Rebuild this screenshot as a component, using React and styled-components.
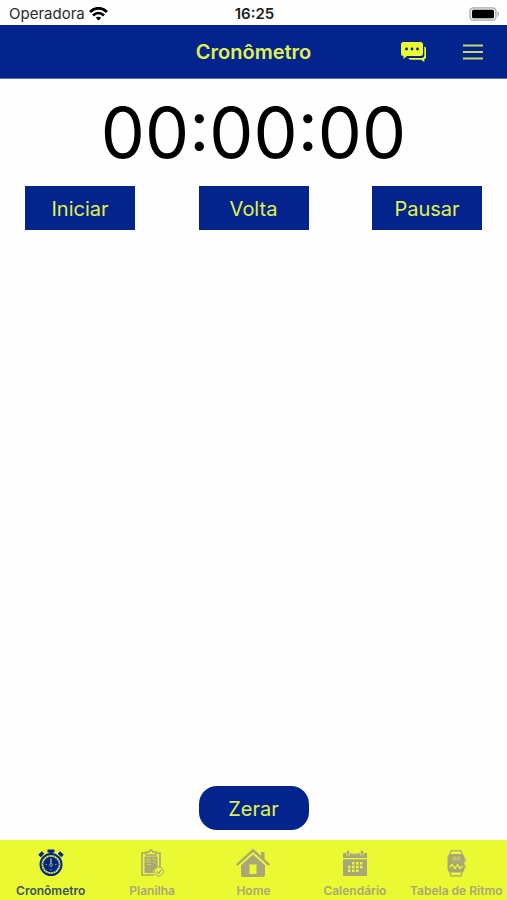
import React from "react";
import styled, { createGlobalStyle } from "styled-components";

const NAVY = "#02248c";
const LIME = "#eaf932";
const LIME_TEXT = "#e2f04e";
const MUTED = "#a9a777";

const GlobalStyle = createGlobalStyle`
  *, *::before, *::after { box-sizing: border-box; }
  body { margin: 0; background: #fff; font-family: Inter, "Liberation Sans", sans-serif; }
  button { font-family: inherit; border: 0; padding: 0; cursor: pointer; }
  svg { display: block; }
`;

const Screen = styled.div`
  display: flex;
  flex-direction: column;
  min-height: 100vh;
  background: #fefefe;
`;

const StatusBar = styled.div`
  display: grid;
  grid-template-columns: 1fr auto 1fr;
  align-items: center;
  height: 25px;
  padding: 2px 7px 0 9px;
  color: #2b2b2b;
  font-size: 15px;
  line-height: 20px;
`;

const Carrier = styled.span`
  display: flex;
  align-items: center;
  gap: 4px;
`;

const Clock = styled.time`
  color: #1c1c1c;
  font-weight: 600;
`;

const BatterySlot = styled.span`
  justify-self: end;
`;

const Header = styled.header`
  display: grid;
  grid-template-columns: 1fr auto 1fr;
  align-items: center;
  height: 54px;
  padding: 0 24px;
  background: ${NAVY};
  border-bottom: 1px solid #5a70b8;
`;

const Title = styled.h1`
  grid-column: 2;
  margin: 0;
  color: ${LIME_TEXT};
  font-size: 20px;
  line-height: 24px;
  font-weight: 600;
`;

const HeaderActions = styled.div`
  display: flex;
  justify-content: flex-end;
  gap: 36px;
`;

const IconButton = styled.button`
  display: grid;
  place-items: center;
  height: 28px;
  background: transparent;
  color: ${LIME};
`;

const Main = styled.main`
  display: flex;
  flex: 1;
  flex-direction: column;
  padding: 16px 25px 10px;
`;

const Timer = styled.output`
  color: #000;
  font-size: 70px;
  line-height: 76px;
  text-align: center;
`;

const Controls = styled.div`
  display: flex;
  justify-content: space-between;
  margin-top: 15px;
`;

const ActionButton = styled.button`
  width: 110px;
  height: 44px;
  padding-top: 2px;
  background: ${NAVY};
  border-radius: ${({ $rounded }) => ($rounded ? "18px" : "0")};
  color: ${LIME_TEXT};
  font-size: 20px;
  line-height: 24px;
`;

const Footer = styled.div`
  display: flex;
  justify-content: center;
  margin-top: auto;
`;

const TabBar = styled.nav`
  display: grid;
  grid-template-columns: repeat(5, 1fr);
  height: 60px;
  background: ${LIME};
`;

const Tab = styled.a`
  display: flex;
  flex-direction: column;
  align-items: center;
  gap: 4px;
  padding-top: 7px;
  color: ${({ $active }) => ($active ? NAVY : MUTED)};
  text-decoration: none;
`;

const TabLabel = styled.span`
  color: ${({ $active }) => ($active ? "#3c5360" : MUTED)};
  font-size: 12px;
  line-height: 16px;
  font-weight: 600;
  white-space: nowrap;
`;

const WifiIcon = () => (
  <svg width="19" height="14" viewBox="0 0 19 14" fill="none" stroke="#000" strokeWidth="2.8" aria-hidden="true">
    <path d="M1 5C6 0 13 0 18 5" />
    <path d="M4 8.4c3.3-3.1 7.7-3.1 11 0" />
    <path d="M6.800 10.800q2.700-2 5.400 0L9.500 13.600z" fill="#000" stroke="none" />
  </svg>
);

const BatteryIcon = () => (
  <svg width="31" height="14" viewBox="0 0 31 14" role="img" aria-label="Bateria">
    <rect x="1" y="0.8" width="26" height="12.4" rx="3.5" fill="#eee" stroke="#aaa" strokeWidth="1.3" />
    <rect x="3" y="2.7" width="22" height="8.6" rx="1.5" fill="#000" />
    <path d="M28.5 4.500c2 .6 2 4.400 0 5z" fill="#aaa" />
  </svg>
);

const ChatIcon = () => (
  <svg width="26" height="20" viewBox="0 0 26 20" fill="currentColor" aria-hidden="true">
    <path d="M3 0h16.500a2.500 2.500 0 0 1 2.500 2.500v9a2.500 2.500 0 0 1-2.500 2.500H6l-3.500 3v-3A2.500 2.500 0 0 1 0 11.500v-9A2.500 2.500 0 0 1 3 0z" />
    <path d="M23.300 4.500c1 .2 1.700 1 1.700 2v8.700c0 1-.6 1.900-1.700 2V20l-3.200-2.300H9.500c-1 0-1.700-.5-2-1.700h12.800a3 3 0 0 0 3-3z" />
    <g fill={NAVY}>
      <circle cx="5.500" cy="7" r="1.400" />
      <circle cx="11" cy="7" r="1.400" />
      <circle cx="16.500" cy="7" r="1.400" />
    </g>
  </svg>
);

const MenuIcon = () => (
  <svg width="20" height="16" viewBox="0 0 20 16" stroke="#c9d868" strokeWidth="1.8" aria-hidden="true">
    <path d="M0 1.500h20M0 8h20M0 14.500h20" />
  </svg>
);

const StopwatchIcon = () => (
  <svg width="28" height="32" viewBox="0 0 28 32" fill="none" stroke="currentColor" aria-hidden="true">
    <path d="M10.500 4h7M14 4v4" strokeWidth="3" />
    <path d="M2.500 9 6 5.500M25.500 9 22 5.500" strokeWidth="3.5" />
    <circle cx="14" cy="17.5" r="10.5" strokeWidth="2" />
    <circle cx="14" cy="17.5" r="7.8" fill="currentColor" stroke="none" />
    <circle cx="14" cy="17.5" r="8.5" strokeWidth="1" strokeDasharray="1 1.67" />
    <path d="M14 11.500v6" stroke={LIME} strokeWidth="1" />
    <circle cx="14" cy="18" r="1.4" fill={NAVY} stroke={LIME} strokeWidth="0.6" />
    <path d="M8.500 17.500H10M18 17.500h1.500M14 22v1.500" stroke={LIME} strokeWidth="0.6" />
  </svg>
);

const ClipboardIcon = () => (
  <svg width="28" height="32" viewBox="0 0 28 32" fill="none" stroke="currentColor" aria-hidden="true">
    <path d="M8 6H4v22h12M18 6h4v14" strokeWidth="1.6" />
    <path d="M8 8V5h3q2-4 4 0h3v3z" strokeWidth="1.3" />
    <path d="M6.500 9.500h13V20l-4 3v3h-9z" fill="currentColor" stroke="none" />
    <path d="M9 12h3v3H9zM9 17.500h4M14 11.500l4 1-2.500 2.500 2.500 2" stroke={LIME} strokeWidth="0.7" opacity="0.7" />
    <circle cx="21" cy="24.5" r="4.5" fill={LIME} strokeWidth="1" />
    <path d="m18.800 24.500 1.700 1.700 3-3.400" strokeWidth="1.3" />
  </svg>
);

const HomeIcon = () => (
  <svg width="34" height="32" viewBox="0 0 34 32" fill="currentColor" aria-hidden="true">
    <path d="M25 5h3.500v9L25 10.800z" />
    <path d="M1.500 17.300 17 3.300l15.500 14" fill="none" stroke="currentColor" strokeWidth="2.4" strokeLinejoin="round" strokeLinecap="round" />
    <path d="M17 7.500 29 18.300V28q0 2-2 2H7q-2 0-2-2v-9.700zM13.500 17.500v9.500h7v-9.500z" fillRule="evenodd" />
  </svg>
);

const CalendarIcon = () => (
  <svg width="28" height="32" viewBox="0 0 28 32" fill="currentColor" aria-hidden="true">
    <path d="M2 6h24v5H2zM2 12.300h24V29H2z" />
    <path d="M5.500 3.500h3V8h-3zM19.500 3.500h3V8h-3z" stroke={LIME} strokeWidth="0.7" />
    <path d="M10 6.700h8" stroke={LIME} strokeWidth="0.7" />
    <g fill={LIME}>
      <path d="M11 15h2.500v2.500H11zM15 15h2.500v2.500H15zM19 15h2.500v2.500H19z" />
      <path d="M7 18.800h2.500v2.500H7zM11 18.800h2.500v2.500H11zM15 18.800h2.500v2.500H15zM19 18.800h2.500v2.500H19z" />
      <path d="M7 22.600h2.500v2.500H7zM11 22.600h2.500v2.500H11zM15 22.600h2.500v2.500H15z" />
    </g>
  </svg>
);

const WatchIcon = () => (
  <svg width="28" height="32" viewBox="0 0 28 32" fill="none" stroke="currentColor" aria-hidden="true">
    <path d="M7.500 8 9 3.800h10L20.500 8M7.500 24 9 28.800h10l1.500-4.800" strokeWidth="1.2" />
    <rect x="6" y="7.5" width="16" height="17.5" rx="3" fill="currentColor" />
    <path d="M23 11.500v3M23 18v3" strokeWidth="1.3" />
    <path d="M11 10h2.500v3H11v-3M15 10v3h2.500v-3z" stroke={LIME} strokeWidth="0.6" opacity="0.8" />
    <path d="m7.500 20 2.500-2.500 3 4 2.500-4 2.500 4 2.500-2.500" stroke={LIME} strokeWidth="1.3" />
  </svg>
);

const TABS = [
  { label: "Cronômetro", Icon: StopwatchIcon, href: "#cronometro", active: true },
  { label: "Planilha", Icon: ClipboardIcon, href: "#planilha" },
  { label: "Home", Icon: HomeIcon, href: "#home" },
  { label: "Calendário", Icon: CalendarIcon, href: "#calendario" },
  { label: "Tabela de Ritmo", Icon: WatchIcon, href: "#ritmo" },
];

export default function App() {
  return (
    <Screen>
      <GlobalStyle />
      <StatusBar>
        <Carrier>
          Operadora
          <WifiIcon />
        </Carrier>
        <Clock>16:25</Clock>
        <BatterySlot>
          <BatteryIcon />
        </BatterySlot>
      </StatusBar>
      <Header>
        <Title>Cronômetro</Title>
        <HeaderActions>
          <IconButton type="button" aria-label="Mensagens">
            <ChatIcon />
          </IconButton>
          <IconButton type="button" aria-label="Menu">
            <MenuIcon />
          </IconButton>
        </HeaderActions>
      </Header>
      <Main>
        <Timer>00:00:00</Timer>
        <Controls>
          <ActionButton type="button">Iniciar</ActionButton>
          <ActionButton type="button">Volta</ActionButton>
          <ActionButton type="button">Pausar</ActionButton>
        </Controls>
        <Footer>
          <ActionButton type="button" $rounded>Zerar</ActionButton>
        </Footer>
      </Main>
      <TabBar>
        {TABS.map(({ label, Icon, href, active }) => (
          <Tab key={label} href={href} $active={active} aria-current={active ? "page" : undefined}>
            <Icon />
            <TabLabel $active={active}>{label}</TabLabel>
          </Tab>
        ))}
      </TabBar>
    </Screen>
  );
}
